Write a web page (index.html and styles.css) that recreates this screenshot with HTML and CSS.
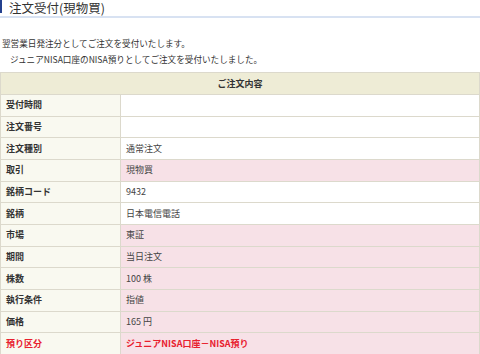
FILE: index.html
```html
<!DOCTYPE html>
<html lang="ja">
<head>
    <meta charset="UTF-8">
    <title>注文受付(現物買)</title>
    <link rel="stylesheet" href="styles.css">
</head>
<body>
<div class="page-title"><span class="title-bar"></span>注文受付(現物買)</div>
<p class="msg">翌営業日発注分としてご注文を受付いたします。</p>
<p class="msg msg-indent">ジュニアNISA口座のNISA預りとしてご注文を受付いたしました。</p>
<table class="order-table">
    <tr>
        <th colspan="2" class="table-head">ご注文内容</th>
    </tr>
    <tr><th>受付時間</th><td></td></tr>
    <tr><th>注文番号</th><td></td></tr>
    <tr><th>注文種別</th><td>通常注文</td></tr>
    <tr class="pink"><th>取引</th><td>現物買</td></tr>
    <tr><th>銘柄コード</th><td>9432</td></tr>
    <tr><th>銘柄</th><td>日本電信電話</td></tr>
    <tr class="pink"><th>市場</th><td>東証</td></tr>
    <tr class="pink"><th>期間</th><td>当日注文</td></tr>
    <tr class="pink"><th>株数</th><td>100 株</td></tr>
    <tr class="pink"><th>執行条件</th><td>指値</td></tr>
    <tr class="pink"><th>価格</th><td>165 円</td></tr>
    <tr class="pink alert"><th>預り区分</th><td>ジュニアNISA口座－NISA預り</td></tr>
</table>
</body>
</html>
```

FILE: styles.css
```css
html {
    overflow: hidden;
}
body {
    margin: 0;
    font-family: "Noto Sans CJK JP", sans-serif;
    font-size: 8.6px;
    color: #333;
    background: #fff;
}
.page-title {
    display: flex;
    align-items: center;
    height: 16px;
    border-bottom: 2px solid #d8e2f2;
    font-size: 12.5px;
    line-height: 16px;
    color: #333;
}
.title-bar {
    align-self: flex-start;
    width: 2px;
    height: 13px;
    margin-right: 7px;
    background: #24408e;
}
.msg {
    margin: 0;
    padding-left: 2px;
    line-height: 16px;
}
.page-title + .msg {
    margin-top: 17px;
}
.msg-indent {
    padding-left: 10px;
}
.order-table {
    width: 100%;
    margin-top: 5px;
    border-collapse: collapse;
}
.order-table th,
.order-table td {
    height: 20.67px;
    padding: 0 5px;
    border: 1px solid #dcd9cc;
    text-align: left;
    font-size: 9px;
    line-height: 12px;
}
.order-table th {
    width: 109px;
    background: #f9f9f0;
    font-weight: bold;
    color: #333;
}
.order-table td {
    background: #fff;
    color: #444;
}
.order-table .table-head {
    height: 21px;
    background: #eeecd6;
    text-align: center;
    font-weight: bold;
}
.order-table .pink td {
    background: #f7e1e7;
}
.order-table .alert th,
.order-table .alert td {
    color: #e8202e;
    font-weight: bold;
}
```
